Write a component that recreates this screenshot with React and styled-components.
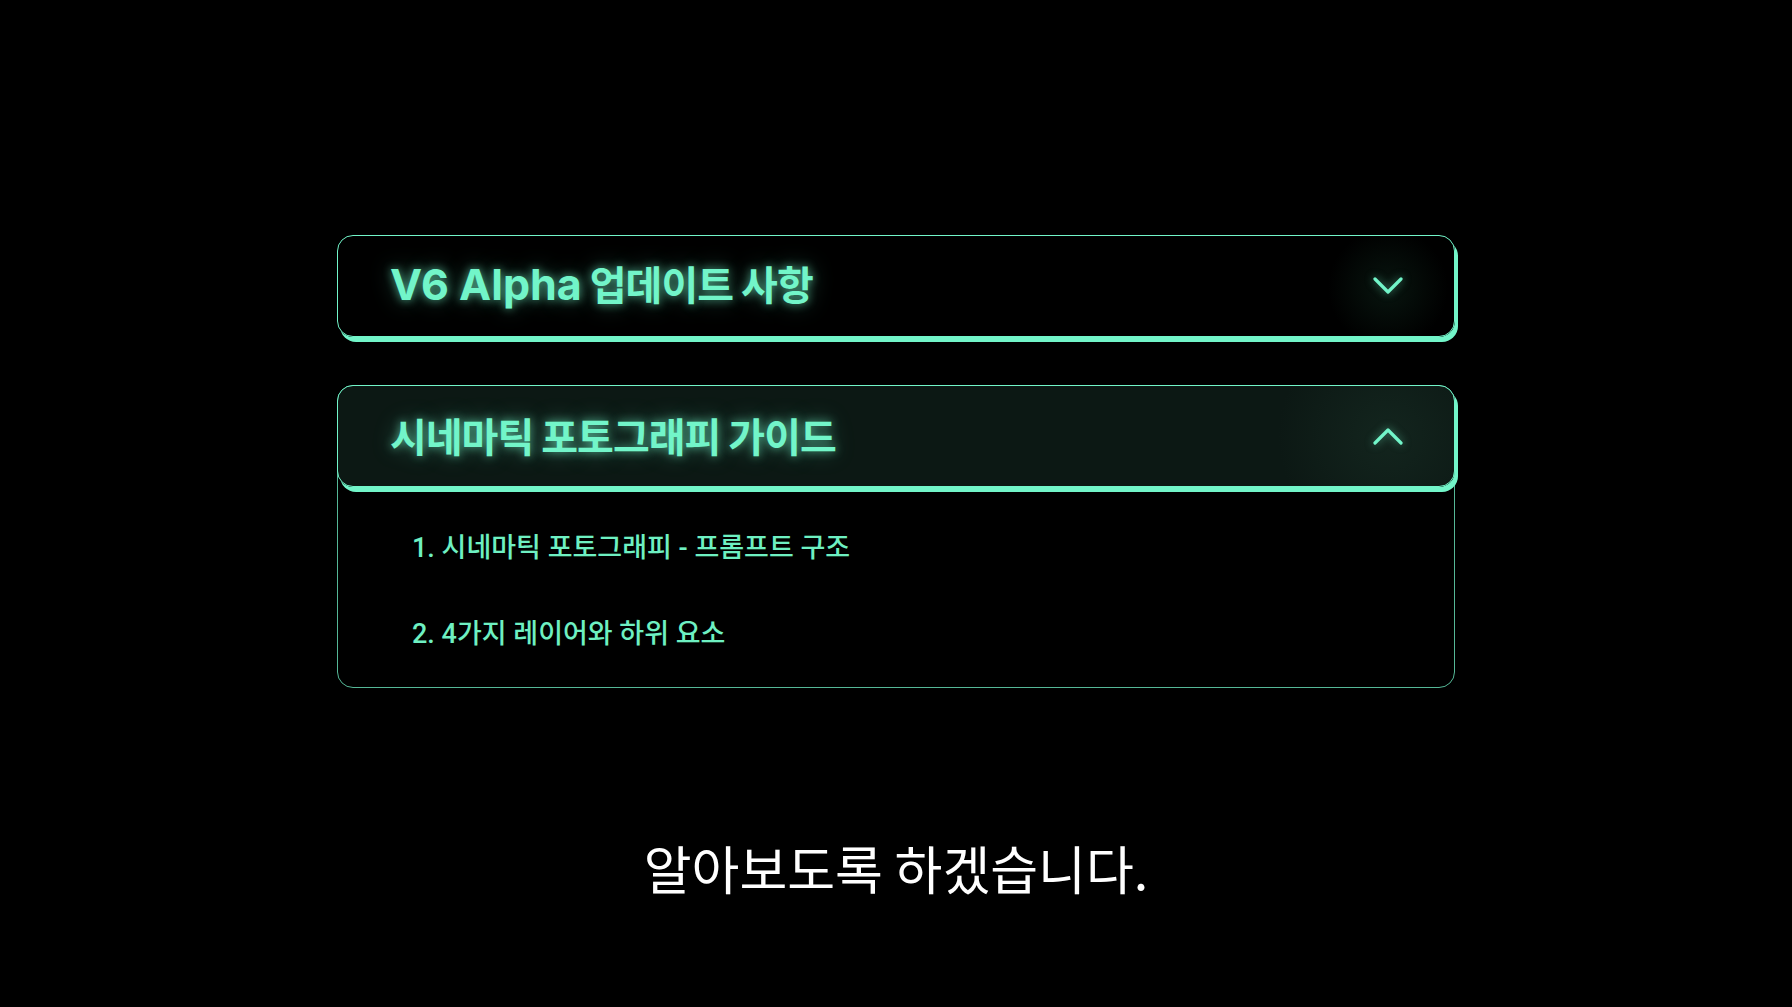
import React from "react";
import styled, { createGlobalStyle } from "styled-components";

const GlobalStyle = createGlobalStyle`
  html, body {
    margin: 0;
    padding: 0;
    background: #000;
  }
  body {
    font-family: "Noto Sans CJK KR", "Noto Sans", sans-serif;
  }
`;

const MINT = "#72f5c9";

const Page = styled.div`
  width: 1792px;
  height: 1007px;
  background: #000;
  display: flex;
  flex-direction: column;
  align-items: center;
  padding-top: 235px;
  box-sizing: border-box;
`;

const List = styled.div`
  width: 1118px;
  display: flex;
  flex-direction: column;
  gap: 48px;
`;

const Header = styled.div`
  height: 102px;
  box-sizing: border-box;
  display: flex;
  align-items: center;
  justify-content: space-between;
  padding: 0 50px 0 52px;
  border: 1px solid ${MINT};
  border-radius: 16px;
  box-shadow: 3px 5px 0 ${MINT};
  background: ${(p) =>
    p.open
      ? "radial-gradient(circle 110px at calc(100% - 66px) 50%, #13251e 0%, #0c1814 100%)"
      : "radial-gradient(circle 60px at calc(100% - 66px) 52%, #08150f 0%, #000 100%)"};
  margin: ${(p) => (p.open ? "-1px -1px 0 -1px" : "0")};
`;

const Title = styled.div`
  font-family: "Noto Sans CJK KR", sans-serif;
  font-weight: 700;
  font-size: 40px;
  letter-spacing: -1px;
  color: ${MINT};
  text-shadow: 0 0 10px rgba(114, 245, 201, 0.65), 0 0 22px rgba(114, 245, 201, 0.35);
  line-height: 1;
  margin-top: -3px;
`;

const Latin = styled.span`
  font-family: "Inter", sans-serif;
  font-size: 43px;
  letter-spacing: 0;
`;

const Chevron = styled.svg`
  width: 32px;
  height: 20px;
  display: block;
  filter: drop-shadow(0 0 4px rgba(114, 245, 201, 0.5));
`;

const Panel = styled.div`
  border: 1px solid rgba(114, 245, 201, 0.75);
  border-radius: 16px;
  display: flex;
  flex-direction: column;
`;

const Items = styled.ol`
  list-style: none;
  margin: 0;
  padding: 45px 0 37px 74px;
  display: flex;
  flex-direction: column;
  gap: 54px;
`;

const Item = styled.li`
  font-family: "Roboto", "Noto Sans CJK KR", sans-serif;
  font-weight: 500;
  font-size: 27px;
  line-height: 32px;
  color: #6ef0c2;
`;

const Subtitle = styled.div`
  margin-top: 150px;
  font-family: "Noto Sans CJK KR", sans-serif;
  font-weight: 400;
  font-size: 52px;
  line-height: 60px;
  color: #fff;
`;

function ChevronIcon({ up }) {
  return (
    <Chevron viewBox="0 0 32 20">
      <path
        d={up ? "M3 17 L16 4 L29 17" : "M3 3 L16 16 L29 3"}
        fill="none"
        stroke={MINT}
        strokeWidth="3.2"
        strokeLinecap="round"
        strokeLinejoin="round"
      />
    </Chevron>
  );
}

export default function App() {
  return (
    <>
      <GlobalStyle />
      <Page>
        <List>
          <Header>
            <Title>
              <Latin>V6 Alpha</Latin> 업데이트 사항
            </Title>
            <ChevronIcon />
          </Header>
          <Panel>
            <Header open>
              <Title>시네마틱 포토그래피 가이드</Title>
              <ChevronIcon up />
            </Header>
            <Items>
              <Item>1. 시네마틱 포토그래피 - 프롬프트 구조</Item>
              <Item>2. 4가지 레이어와 하위 요소</Item>
            </Items>
          </Panel>
        </List>
        <Subtitle>알아보도록 하겠습니다.</Subtitle>
      </Page>
    </>
  );
}
